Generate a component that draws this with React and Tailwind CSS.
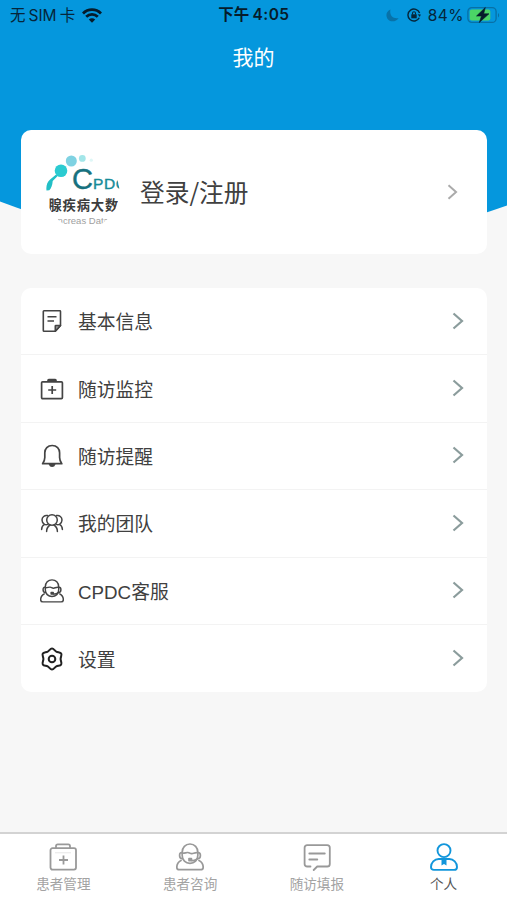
import { useState } from "react";

const NoteIcon = () => (
    <svg viewBox="0 0 24 24" className="w-6 h-6" fill="none" stroke="#444" strokeWidth="1.6" strokeLinejoin="round">
        <path d="M4 1.800h15.800a.7.7 0 0 1 .7.7v14l-5.200 5.700H4a.7.7 0 0 1-.7-.7v-19a.7.7 0 0 1 .7-.7z" />
        <path d="M20.500 16.500h-4.700a.5.5 0 0 0-.5.5v5.200z" fill="#999" />
        <path d="M7.500 7.800h9M7.500 12h6.500" />
    </svg>
);

const KitIcon = () => (
    <svg viewBox="0 0 24 24" className="w-6 h-6" fill="none" stroke="#444" strokeWidth="1.700">
        <rect x="1.600" y="4.800" width="20.800" height="16.800" rx="1" />
        <path d="M8 5V3.400a.8.8 0 0 1 .8-.8h6.400a.8.8 0 0 1 .8.8V5M8.500 3.900h7M12.200 9v8M8.200 13h8" />
    </svg>
);

const BellIcon = () => (
    <svg viewBox="0 0 24 24" className="w-6 h-6" fill="none" stroke="#444" strokeWidth="1.700" strokeLinejoin="round">
        <path d="M12.200 1.500c-4.600 0-7.400 3-7.400 7.300v4.600c0 2.400-.6 4-2.200 6.300h19.200c-1.600-2.300-2.200-3.900-2.200-6.300V8.800c0-4.300-2.800-7.300-7.400-7.300z" />
        <path d="M9.600 20.200c.4 1.300 1.300 2 2.500 2s2.100-.7 2.500-2z" fill="#444" />
    </svg>
);

const TeamIcon = () => (
    <svg viewBox="0 0 24 24" className="w-6 h-6" fill="none" stroke="#444" strokeWidth="1.500" strokeLinecap="round">
        <circle cx="12" cy="9" r="5.300" />
        <path d="M6.600 20.400c0-3 1.300-5 3.600-6.400M17.400 20.400c0-3-1.300-5-3.600-6.400" />
        <path d="M7.500 4.600c-3-.6-5.500 1.400-5.500 4.500 0 1.900.9 3.400 2.500 4.300-1.800 1-2.900 2.800-2.900 5.200M4.500 13.400c1 .4 2.200.4 3.200-.1" />
        <path d="M16.500 4.600c3-.6 5.500 1.400 5.500 4.500 0 1.900-.9 3.400-2.500 4.300 1.800 1 2.900 2.800 2.900 5.200M19.500 13.400c-1 .4-2.200.4-3.200-.1" />
    </svg>
);

const ServiceIcon = ({ className, color }) => (
    <svg viewBox="0 0 28 28" className={className} fill="none" stroke={color} strokeWidth="1.700" strokeLinejoin="round" strokeLinecap="round">
        <path d="M6.200 9.200C6.200 4.500 9.400 1 14 1s7.800 3.500 7.800 8.200v3.400c0 4.600-3.300 7.800-7.800 7.800s-7.800-3.200-7.800-7.800z" />
        <path d="M6.500 10.200c2.300.2 3.600-.9 5.400-.7 1.500.2 2.300 1.400 4 1.200 1.800-.2 2.600-1.200 5.400-1" />
        <path d="M5.800 9.600c-1.600 0-2.200 1-2.200 2.900s.8 3.100 2.600 3.100M22.200 9.600c1.600 0 2.200 1 2.200 2.900s-.8 3.100-2.600 3.100" />
        <path d="M20.800 16.200c-1.400 1.200-3.200 1.600-5.200 1.200" />
        <path d="M13 15.600h2.400v2H13z" fill={color} />
        <path d="M5 17.400c-2.700 1.400-4.200 3.900-4.200 6.800 0 1.600.9 2.500 2.500 2.500h21.400c1.600 0 2.500-.9 2.500-2.500 0-2.900-1.500-5.400-4.200-6.800" />
    </svg>
);

const GearIcon = () => (
    <svg viewBox="0 0 24 24" className="w-6 h-6" fill="none" stroke="#222" strokeWidth="2" strokeLinejoin="round">
        <path d="M12 1.500C13.900 1.500 14.600 3.700 16.300 4.600 18.100 5.500 20.300 5 21.200 6.600 22.100 8.200 20.600 9.900 20.600 12 20.600 14.100 22.100 15.800 21.200 17.400 20.300 19 18.100 18.500 16.300 19.400 14.600 20.300 13.900 22.500 12 22.500 10.100 22.500 9.400 20.300 7.700 19.400 5.900 18.500 3.700 19 2.800 17.400 1.900 15.800 3.400 14.100 3.400 12 3.400 9.900 1.900 8.200 2.800 6.600 3.700 5 5.900 5.500 7.700 4.600 9.400 3.700 10.100 1.500 12 1.500z" />
        <circle cx="12" cy="12" r="3.300" />
    </svg>
);

const TabKitIcon = () => (
    <svg viewBox="0 0 28 28" className="w-7 h-7" fill="none" stroke="#999" strokeWidth="1.800">
        <rect x="1.500" y="5.200" width="25.500" height="21.400" rx="2" />
        <path d="M7 5V3.200C7 2.200 7.700 1.400 8.700 1.400h10.600c1 0 1.700.8 1.700 1.800V5M14.500 12.500v9M10 17h9" />
        <path d="M6 9.800h16" stroke="#e6e6e6" strokeWidth="1" />
    </svg>
);

const TabChatIcon = () => (
    <svg viewBox="0 0 28 28" className="w-7 h-7" fill="none" stroke="#999" strokeWidth="1.800" strokeLinecap="round" strokeLinejoin="round">
        <path d="M7.500 23.500H4.200c-1.600 0-2.600-1-2.600-2.600V4.800c0-1.600 1-2.600 2.600-2.600h20c1.600 0 2.600 1 2.600 2.600v16.100c0 1.600-1 2.600-2.600 2.600H14.200L10.700 27" />
        <path d="M6.300 10.500h15.500M6.300 16.500h8" />
    </svg>
);

const TabUserIcon = () => (
    <svg viewBox="0 0 28 28" className="w-7 h-7" fill="none" stroke="#1296db" strokeWidth="1.900">
        <circle cx="14" cy="7.600" r="6.500" />
        <path d="M8.700 16h10.600c4.200 0 7.700 3.600 7.700 7.900 0 1.900-1 3-2.900 3H3.900c-1.900 0-2.900-1.100-2.900-3C1 19.600 4.500 16 8.700 16z" />
        <path d="M11.500 16h5v6.400L14 21l-2.500 1.400z" fill="#1296db" stroke="none" />
    </svg>
);

const Arrow = ({ color, className }) => (
    <svg viewBox="0 0 12 18" className={className} fill="none" stroke={color} strokeWidth="2.200">
        <path d="M1.500 1.500 10 9l-8.500 7.500" />
    </svg>
);

const Logo = () => (
    <svg viewBox="0 0 74 74" className="w-[74px] h-[74px]">
        <clipPath id="avatar">
            <circle cx="36.500" cy="37" r="37" />
        </clipPath>
        <path d="M.5 35.500c-.6-4.500.6-8.500 3.600-11l6-5 1.600 1.600-5 5c-.2 4-1.600 7.600-3.400 9.200z" fill="#22bfc6" />
        <circle cx="15" cy="15.800" r="6.300" fill="#2bcbd1" />
        <circle cx="25.300" cy="6" r="5.500" fill="#7fd2e2" />
        <circle cx="36.300" cy="3.400" r="3.400" fill="#a3e6e9" />
        <circle cx="45.300" cy="5.200" r="1.600" fill="#dff7f7" />
        <g clipPath="url(#avatar)">
            <text x="26" y="33.500" fontFamily="Liberation Sans, sans-serif" fontSize="29" textLength="21" lengthAdjust="spacingAndGlyphs" fill="#17717e" stroke="#17717e" strokeWidth=".4">C</text>
            <text x="47" y="33.500" fontFamily="Liberation Sans, sans-serif" fontSize="15.500" letterSpacing=".6" fill="#168b98" stroke="#168b98" strokeWidth=".4">PDC</text>
            <text x="2.500" y="55" fontFamily="'Noto Sans CJK SC', sans-serif" fontWeight="700" fontSize="13.300" letterSpacing=".8" fill="#3c3c3c">腺疾病大数</text>
            <text x="0" y="68.500" fontFamily="Liberation Sans, sans-serif" fontSize="9.500" fill="#a0a0a0">Pancreas Data</text>
        </g>
    </svg>
);

const menus = [
    { name: "基本信息", icon: <NoteIcon /> },
    { name: "随访监控", icon: <KitIcon /> },
    { name: "随访提醒", icon: <BellIcon /> },
    { name: "我的团队", icon: <TeamIcon /> },
    { name: "CPDC客服", icon: <ServiceIcon className="w-6 h-6" color="#444" /> },
    { name: "设置", icon: <GearIcon /> },
];

const tabs = [
    { name: "患者管理", icon: <TabKitIcon /> },
    { name: "患者咨询", icon: <ServiceIcon className="w-7 h-7" color="#999" /> },
    { name: "随访填报", icon: <TabChatIcon /> },
    { name: "个人", icon: <TabUserIcon /> },
];

const StatusBar = () => (
    <div className="h-[30px] pl-[10px] pr-[7px] grid grid-cols-3 items-center text-[15.500px] text-[#06263a]">
        <div className="flex items-center">
            <span className="whitespace-nowrap pt-px">无<span className="mx-[3px]">SIM</span>卡</span>
            <svg viewBox="0 0 20 15" className="w-5 h-[15px] ml-[7px]" fill="none" stroke="#061c2b" strokeWidth="2.800">
                <path d="M1 5.400c5-5 13-5 18 0M4.200 8.700c3.300-3.200 8.300-3.200 11.600 0" />
                <path d="M10 14.800 6.800 11.600c1.800-1.700 4.600-1.700 6.400 0z" fill="#061c2b" stroke="none" />
            </svg>
        </div>
        <div className="text-center font-semibold whitespace-nowrap text-[#061c2b] pr-[2px]">下午<span className="ml-[3px] tracking-[0.5px]">4:05</span></div>
        <div className="flex items-center justify-end">
            <svg viewBox="0 0 14 14" className="w-[13px] h-[13px] mr-2" fill="#0872a8">
                <path d="M4.800.6C.5 2.500-.6 7 1.400 10.200c2.600 4.200 9.300 4.300 12.200-.6C7.500 11 3.400 6.500 4.800.6z" />
            </svg>
            <svg viewBox="0 0 14 14" className="w-[14px] h-[14px] mr-[7px]" fill="none" stroke="#06263a" strokeWidth="1.400">
                <path d="M12.600 5A6 6 0 1 0 12.300 9.800" />
                <path d="m10.700 6.200 3.100.3-1 2.500z" fill="#06263a" stroke="none" />
                <rect x="4.300" y="6.300" width="5.400" height="4" fill="#06263a" stroke="none" />
                <path d="M5.500 6.500V5.300a1.500 1.500 0 0 1 3 0v1.200" strokeWidth="1.100" />
            </svg>
            <span className="tracking-[0.5px] mr-[3px] pt-px">84%</span>
            <svg viewBox="0 0 33 18" className="w-[33px] h-[18px]">
                <rect x=".9" y="1.600" width="28.200" height="14.800" rx="4" fill="none" stroke="#0870a5" strokeWidth="1.300" />
                <rect x="2.800" y="3.600" width="20.500" height="10.800" rx="2" fill="#4bd566" />
                <path d="M31 7v4.400c1.500-.8 1.500-3.600 0-4.400z" fill="#0870a5" />
                <path d="M18.300 1.500 9.500 10h5l-2.200 6.500L22 7.800h-5.300z" fill="#061c2b" stroke="#061c2b" strokeWidth=".6" strokeLinejoin="round" />
            </svg>
        </div>
    </div>
);

const App = () => {
    const [active, setActive] = useState(3);

    return (
        <div className="relative isolate h-[900px] w-full max-w-[507px] flex flex-col bg-[#f7f7f7] overflow-hidden font-['Inter','Noto_Sans_CJK_SC',sans-serif]">
            {/* curved blue background behind the header */}
            <svg viewBox="0 0 507 260" className="absolute top-0 left-0 -z-10 w-full h-[260px]">
                <path d="M0 0h507v205.500C340 266 165 264 0 201.500z" fill="#0597dd" />
            </svg>

            <StatusBar />
            <h1 className="h-[54px] text-center leading-[52px] text-[21px] text-white font-['Noto_Sans_CJK_SC',sans-serif]">我的</h1>

            <div className="mt-[46px] ml-[21px] mr-[20px] h-[124px] rounded-[10px] bg-white flex items-center pl-[25px] pr-[29px]">
                <Logo />
                <span className="ml-5 flex-1 text-[24.700px] text-[#404040] font-['Noto_Sans_CJK_SC',sans-serif]">登录/注册</span>
                <Arrow color="#aaa" className="w-[11px] h-4" />
            </div>

            <div className="mt-[34px] ml-[21px] mr-[20px] rounded-[10px] bg-white">
                {menus.map((item, index) => (
                    <div key={index} className="h-[67.400px] flex items-center pl-[19px] pr-[23px] border-b border-[#f3f3f3] last:border-b-0 cursor-pointer">
                        {item.icon}
                        <span className="ml-[14px] flex-1 pt-1 text-[18.750px] text-[#404040] font-['Liberation_Sans','Noto_Sans_CJK_SC',sans-serif]">{item.name}</span>
                        <Arrow color="#8b9c9c" className="w-3 h-[18px] mb-px" />
                    </div>
                ))}
            </div>

            <div className="mt-auto h-[68px] grid grid-cols-4 bg-white border-t-2 border-[#d3d3d3]">
                {tabs.map((tab, index) => (
                    <button key={index} onClick={() => setActive(index)} className="flex flex-col items-center pt-[9px] cursor-pointer">
                        {tab.icon}
                        <span className={`mt-[2px] text-[13.600px] leading-5 font-['Noto_Sans_CJK_SC',sans-serif] ${active === index ? "text-[#555]" : "text-[#a3a3a3]"}`}>{tab.name}</span>
                    </button>
                ))}
            </div>
        </div>
    );
};

export default App;
